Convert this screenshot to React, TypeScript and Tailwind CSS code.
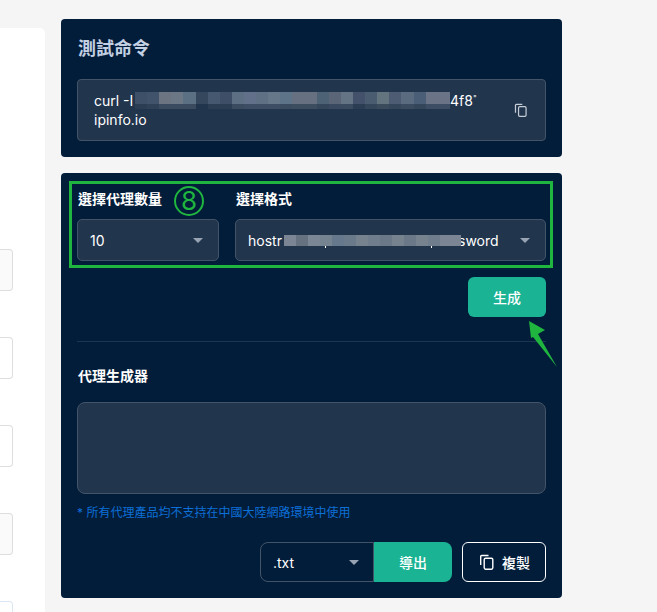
const font = "font-['Inter','Noto_Sans_CJK_TC',sans-serif]";

const cmdTop = [
  "bg-[#3e5068]", "bg-[#41536a]", "bg-[#6b7480]", "bg-[#6b7784]", "bg-[#5c7084]", "bg-[#35475c]", "bg-[#465870]",
  "bg-[#3d4e66]", "bg-[#5d6f82]", "bg-[#62708a]", "bg-[#5f7084]", "bg-[#66778a]", "bg-[#5d7488]", "bg-[#667080]",
  "bg-[#667080]", "bg-[#4e6276]", "bg-[#5a6578]", "bg-[#647484]", "bg-[#43526a]", "bg-[#4a5c70]", "bg-[#64747e]",
  "bg-[#4d5c72]", "bg-[#5a6b80]", "bg-[#4a5e78]", "bg-[#6a7486]", "bg-[#6a7486]",
];
const cmdBottom = [
  "bg-[#2a3d52]", "bg-[#2f4157]", "bg-[#3a4b60]", "bg-[#3a4b60]", "bg-[#3a4b60]", "bg-[#21354d]", "bg-[#2a3d52]",
  "bg-[#2a3d52]", "bg-[#3a4b60]", "bg-[#3d4d64]", "bg-[#3d4d64]", "bg-[#3d4d64]", "bg-[#3a4b60]", "bg-[#3d4d60]",
  "bg-[#3d4d60]", "bg-[#33465a]", "bg-[#384960]", "bg-[#3a4b60]", "bg-[#2a3d52]", "bg-[#33465a]", "bg-[#3a4b5c]",
  "bg-[#33465a]", "bg-[#3a4b60]", "bg-[#33465a]", "bg-[#3d4d64]", "bg-[#3d4d64]",
];
const formatBlocks = [
  "bg-[#7b8594]", "bg-[#66727f]", "bg-[#7b8794]", "bg-[#758290]", "bg-[#66788c]", "bg-[#6a7a8a]", "bg-[#76838f]",
  "bg-[#6f7d8c]", "bg-[#6a7888]", "bg-[#76838f]", "bg-[#6a7888]", "bg-[#76838f]", "bg-[#6f7d8c]", "bg-[#7b8594]",
];

function Caret() {
  return <span className="h-0 w-0 border-x-[5px] border-t-[5px] border-x-transparent border-t-[#98a3b3]" />;
}

function CopyIcon({ className }: { className: string }) {
  return (
    <svg className={className} viewBox="0 0 16 16" fill="none" stroke="currentColor" strokeWidth="1.4">
      <path d="M1.7 11V2.5a1 1 0 0 1 1-1H9.5" />
      <rect x="5.2" y="4.2" width="8.6" height="11" rx="1.4" />
    </svg>
  );
}

function Select({ className, children }: { className: string; children: React.ReactNode }) {
  return (
    <div className={`flex h-[42px] items-center justify-between rounded-[5px] border border-[#445468] bg-[#21354d] pl-[12px] pr-[15px] text-[14px] text-white ${className}`}>
      {children}
      <Caret />
    </div>
  );
}

function Sidebar() {
  return (
    <div className="mt-[28px] flex h-[584px] w-[45px] shrink-0 flex-col gap-[46px] overflow-hidden rounded-tr-[5px] bg-white pt-[221px]">
      {["bg-[#fafafa]", "bg-white", "bg-white", "bg-[#fafafa]"].map((bg, i) => (
        <div key={i} className={`h-[42px] w-[13px] shrink-0 rounded-r-[4px] border border-l-0 border-[#dedede] ${bg}`} />
      ))}
      <div className="h-[42px] w-[13px] shrink-0 rounded-r-[4px] border border-l-0 border-[#dbe6f5]" />
    </div>
  );
}

function TestCommand() {
  return (
    <section className="h-[138px] rounded-[4px] bg-[#021d3a] px-[16px] pt-[18px]">
      <h2 className="ml-px h-[24px] text-[18px] font-semibold leading-[24px] text-[#c3cfe2]">測試命令</h2>
      <div className="mt-[18px] flex h-[62px] items-center justify-between rounded-[4px] border border-[#445468] bg-[#21354d] pl-[16px] pr-[17px] text-[14px] text-white">
        <div className="leading-[19px]">
          <div className="flex h-[19px] items-center">
            <span className="w-[41px] shrink-0">curl -I</span>
            <div className="flex h-[17px] w-[315px] shrink-0 flex-col overflow-hidden">
              <div className="flex h-[12px]">
                {cmdTop.map((c, i) => <span key={i} className={`h-[12px] w-[12.12px] shrink-0 ${c}`} />)}
              </div>
              <div className="flex h-[5px]">
                {cmdBottom.map((c, i) => <span key={i} className={`h-[5px] w-[12.12px] shrink-0 ${c}`} />)}
              </div>
            </div>
            <span>4f8</span>
            <span className="-mt-[6px] text-[8px] leading-none">"</span>
          </div>
          <div>ipinfo.io</div>
        </div>
        <CopyIcon className="h-[14px] w-[14px] text-[#c5ccd6]" />
      </div>
    </section>
  );
}

function Generator() {
  return (
    <section className="relative h-[425px] rounded-[4px] bg-[#021d3a] px-[16px] pt-[16px]">
      <div className="flex gap-[16px]">
        <div className="w-[142px]">
          <label className="ml-px block h-[20px] text-[14px] font-semibold leading-[20px] text-white">選擇代理數量</label>
          <Select className="mt-[10px]">10</Select>
        </div>
        <div className="flex-1">
          <label className="ml-px block h-[20px] text-[14px] font-semibold leading-[20px] text-white">選擇格式</label>
          <Select className="mt-[10px]">
            <div className="flex items-center">
              <span className="w-[36px] shrink-0">hostr</span>
              <div className="relative z-10 flex h-[11px] w-[177px] shrink-0 bg-[#7b8594]">
                {formatBlocks.map((c, i) => <span key={i} className={`h-[11px] w-[12px] shrink-0 ${c}`} />)}
                {/* descenders left showing under the mosaic */}
                <span className="absolute left-[41px] top-[11px] h-[2px] w-px bg-white" />
                <span className="absolute left-[147px] top-[11px] h-[2px] w-px bg-white" />
              </div>
              <span className="-ml-[3px]">sword</span>
            </div>
          </Select>
        </div>
      </div>

      <div className="mt-[16px] flex justify-end">
        <button className="h-[40px] w-[78px] rounded-[6px] bg-[#1ab394] text-[14px] font-medium text-white">生成</button>
      </div>

      <div className="mt-[24px] border-t border-[#1c3550]" />

      <label className="ml-px mt-[24px] block h-[20px] text-[14px] font-semibold leading-[20px] text-white">代理生成器</label>
      <div className="mt-[16px] h-[92px] rounded-[8px] border border-[#445468] bg-[#21354d]" />
      <p className="mt-[11px] h-[16px] text-[12px] leading-[16px] text-[#0d6fd8]">* 所有代理產品均不支持在中國大陸網路環境中使用</p>

      <div className="mt-[21px] flex justify-end gap-[10px]">
        <div className="flex">
          <div className="flex h-[40px] w-[114px] items-center justify-between rounded-l-[8px] border border-[#445468] pl-[12px] pr-[14px] text-[14px] text-white">
            .txt
            <Caret />
          </div>
          <button className="h-[40px] w-[78px] rounded-r-[8px] bg-[#1ab394] text-[14px] font-medium text-white">導出</button>
        </div>
        <button className="flex h-[40px] w-[84px] items-center justify-center gap-[7px] rounded-[6px] border border-white pl-px text-[14px] font-medium text-white">
          <CopyIcon className="h-[16px] w-[16px]" />
          複製
        </button>
      </div>

      {/* annotations drawn over the screenshot */}
      <div className="pointer-events-none absolute left-[8px] top-[8px] h-[87px] w-[484px] border-[3px] border-[#1fb53e]" />
      <div className="pointer-events-none absolute left-[113px] top-[13px] flex h-[30px] w-[30px] items-center justify-center rounded-full border-[2px] border-[#1fb53e] text-[26px] leading-none text-[#1fb53e]">8</div>
    </section>
  );
}

export default function App() {
  return (
    <div className={`relative flex h-[612px] w-[657px] gap-[16px] overflow-hidden bg-[#f5f5f5] ${font}`}>
      <Sidebar />
      <div className="mt-[19px] flex w-[501px] shrink-0 flex-col gap-[16px]">
        <TestCommand />
        <Generator />
      </div>
      <svg className="pointer-events-none absolute left-[525px] top-[318px] h-[52px] w-[36px]" viewBox="525 318 36 52">
        <polygon points="529,321 545,330 538,334 557,367 533,337 531,338" fill="#1fb53e" />
      </svg>
    </div>
  );
}
